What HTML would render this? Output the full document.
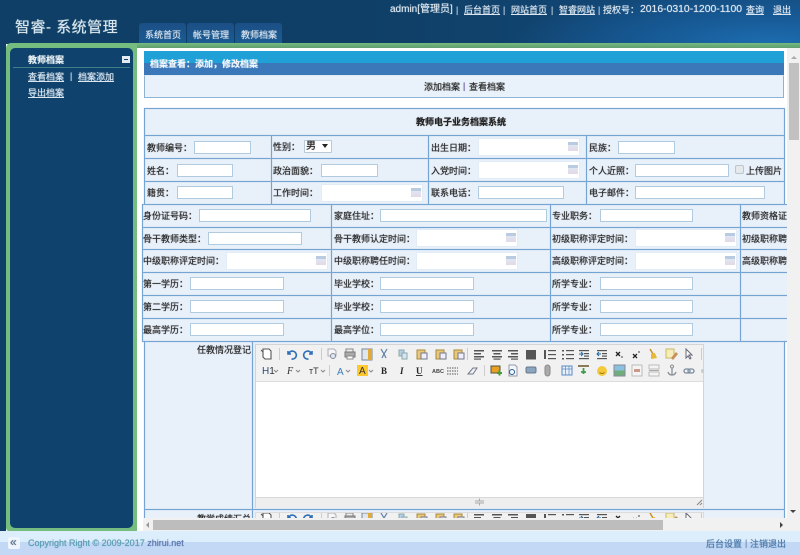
<!DOCTYPE html>
<html lang="zh">
<head>
<meta charset="utf-8">
<title>智睿-系统管理</title>
<style>
html,body{margin:0;padding:0;width:800px;height:555px;overflow:hidden;background:#fff}
body{position:relative;font-family:"Liberation Sans","Noto Sans CJK SC",sans-serif;font-size:9px;color:#2b2b2b}
div,span,a,i{position:absolute;display:block;font-style:normal}
.t{white-space:nowrap;line-height:12px;height:12px;text-shadow:0 0 .7px currentColor}
.l{background:#76a4d2;box-shadow:0 0 1px #a9c6e4}
.i{background:#fff;border:1px solid #b0cadf;box-sizing:border-box;height:13px}
.d{background:#fff;border:1px solid #e2ecf6;box-sizing:border-box;height:18px}
.d:after{content:"";position:absolute;right:1px;top:3px;width:10px;height:9px;background:linear-gradient(#b9cbe0 0 3px,#dfe6f2 3px,#e3d9e6 100%)}
a{color:#dbe6f0;text-decoration:underline}
</style>
</head>
<body>
<!-- header -->
<div style="left:0;top:0;width:800px;height:44px;background:radial-gradient(ellipse 260px 60px at 770px 44px,#1d6db0 0%,#175a96 45%,rgba(20,75,125,0) 100%),linear-gradient(90deg,#0f3f66 0,#0f3f66 45%,#134a7c 100%)"></div>
<div class="t" style="left:15px;top:18px;height:20px;line-height:20px;font-size:15px;color:#d8e6ee;letter-spacing:.5px">智睿- 系统管理</div>
<div style="left:139px;top:23px;width:47px;height:20px;background:linear-gradient(#1b4f85,#1a5b92);border-radius:3px 3px 0 0"></div>
<div style="left:187px;top:23px;width:47px;height:20px;background:linear-gradient(#1b4f85,#1a5b92);border-radius:3px 3px 0 0"></div>
<div style="left:235px;top:23px;width:47px;height:20px;background:linear-gradient(#1b4f85,#1a5b92);border-radius:3px 3px 0 0"></div>
<div class="t" style="left:145px;top:29px;color:#d5e2ee">系统首页</div>
<div class="t" style="left:193px;top:29px;color:#d5e2ee">帐号管理</div>
<div class="t" style="left:241px;top:29px;color:#d5e2ee">教师档案</div>

<div class="t" style="left:390px;top:4px;font-size:10px;color:#dbe6f0">admin[管理员]</div>
<div class="t" style="left:456px;top:4px;color:#b8cde0">|</div>
<a class="t" style="left:464px;top:4px">后台首页</a>
<div class="t" style="left:503px;top:4px;color:#b8cde0">|</div>
<a class="t" style="left:511px;top:4px">网站首页</a>
<div class="t" style="left:551px;top:4px;color:#b8cde0">|</div>
<a class="t" style="left:559px;top:4px">智睿网站</a>
<div class="t" style="left:598px;top:4px;color:#b8cde0">|</div>
<div class="t" style="left:603px;top:4px;color:#dbe6f0">授权号：</div>
<div class="t" style="left:640px;top:4px;font-size:10.4px;color:#dbe6f0">2016-0310-1200-1100</div>
<a class="t" style="left:746px;top:4px">查询</a>
<a class="t" style="left:773px;top:4px">退出</a>

<!-- left side -->
<div style="left:0;top:44px;width:6px;height:487px;background:#0f3f66"></div>
<div style="left:6px;top:43px;width:131px;height:488px;background:#75bd7e;border-radius:5px 0 0 3px"></div>
<div style="left:137px;top:43px;width:663px;height:5px;background:linear-gradient(#76bb7e,#5f9e70)"></div>
<div style="left:10px;top:48px;width:123px;height:480px;background:#0f436d;border-radius:5px"></div>
<div class="t" style="left:28px;top:54px;font-weight:bold;color:#e8f0f4">教师档案</div>
<div style="left:122px;top:56px;width:8px;height:7px;background:#e4ecf2"><i style="left:2px;top:3px;width:4px;height:1px;background:#123f66"></i></div>
<div style="left:13px;top:67px;width:117px;height:1px;background:#3f7f86"></div>
<a class="t" style="left:28px;top:71px">查看档案</a>
<div class="t" style="left:70px;top:70px;color:#cfdde8">|</div>
<a class="t" style="left:78px;top:71px">档案添加</a>
<a class="t" style="left:28px;top:87px">导出档案</a>

<!-- main clip -->
<div style="left:137px;top:48px;width:650px;height:470px;overflow:hidden;background:#fff">
 <div style="left:0;top:0;width:650px;height:470px">
  <div style="left:7px;top:3px;width:640px;height:12px;background:#1fa0d6"></div>
  <div style="left:7px;top:15px;width:640px;height:12px;background:#3a78ba"></div>
  <div class="t" style="left:13px;top:10px;color:#f0f6fa;font-weight:bold">档案查看：添加，修改档案</div>
  <div style="left:7px;top:27px;width:640px;height:23px;box-sizing:border-box;background:#e9f1fa;border:1px solid #8fb3d3;border-top-color:#dfe9f3"></div>
  <div class="t" style="left:287px;top:33px">添加档案</div>
  <div class="t" style="left:326px;top:32px;color:#6a55a8">|</div>
  <div class="t" style="left:332px;top:33px">查看档案</div>
 </div>
</div>

<!-- table bgs -->
<div style="left:144px;top:108px;width:640px;height:96px;background:#e8f0fa"></div>
<div style="left:142px;top:204px;width:645px;height:137px;background:#e8f0fa"></div>
<div style="left:144px;top:341px;width:640px;height:177px;background:#e8f0fa"></div>

<!-- table 1 lines -->
<div class="l" style="left:144px;top:108px;width:640px;height:1px"></div>
<div class="l" style="left:144px;top:135px;width:640px;height:1px"></div>
<div class="l" style="left:144px;top:158px;width:640px;height:1px"></div>
<div class="l" style="left:144px;top:181px;width:640px;height:1px"></div>
<div class="l" style="left:142px;top:204px;width:645px;height:1px"></div>
<div class="l" style="left:144px;top:108px;width:1px;height:96px"></div>
<div class="l" style="left:784px;top:108px;width:1px;height:96px"></div>
<div class="l" style="left:271px;top:135px;width:1px;height:69px"></div>
<div class="l" style="left:428px;top:135px;width:1px;height:69px"></div>
<div class="l" style="left:586px;top:135px;width:1px;height:69px"></div>

<!-- table 2 lines -->
<div class="l" style="left:142px;top:227px;width:645px;height:1px"></div>
<div class="l" style="left:142px;top:249px;width:645px;height:1px"></div>
<div class="l" style="left:142px;top:272px;width:645px;height:1px"></div>
<div class="l" style="left:142px;top:295px;width:645px;height:1px"></div>
<div class="l" style="left:142px;top:318px;width:645px;height:1px"></div>
<div class="l" style="left:142px;top:341px;width:645px;height:1px"></div>
<div class="l" style="left:142px;top:204px;width:1px;height:137px"></div>
<div class="l" style="left:331px;top:204px;width:1px;height:137px"></div>
<div class="l" style="left:550px;top:204px;width:1px;height:137px"></div>
<div class="l" style="left:740px;top:204px;width:1px;height:137px"></div>

<!-- table 3 lines -->
<div class="l" style="left:144px;top:341px;width:1px;height:177px"></div>
<div class="l" style="left:252px;top:341px;width:1px;height:177px"></div>
<div class="l" style="left:784px;top:341px;width:1px;height:177px"></div>
<div class="l" style="left:144px;top:509px;width:640px;height:1px"></div>

<!-- table 1 content -->
<div class="t" style="left:416px;top:116px;font-weight:bold;color:#222">教师电子业务档案系统</div>
<div class="t" style="left:147px;top:142px">教师编号：</div><div class="i" style="left:194px;top:141px;width:57px"></div>
<div class="t" style="left:273px;top:141px">性别：</div>
<div style="left:304px;top:140px;width:28px;height:13px;box-sizing:border-box;background:#fff;border:1px solid #b9c9d6;border-radius:1px"></div>
<div class="t" style="left:306px;top:141px;font-size:10px;color:#222">男</div>
<div style="left:322px;top:144px;width:0;height:0;border:3px solid transparent;border-top:4px solid #222;border-bottom:0"></div>
<div class="t" style="left:431px;top:142px">出生日期：</div><div class="d" style="left:478px;top:138px;width:102px"></div>
<div class="t" style="left:589px;top:142px">民族：</div><div class="i" style="left:618px;top:141px;width:57px"></div>

<div class="t" style="left:147px;top:165px">姓名：</div><div class="i" style="left:177px;top:164px;width:56px"></div>
<div class="t" style="left:273px;top:165px">政治面貌：</div><div class="i" style="left:321px;top:164px;width:57px"></div>
<div class="t" style="left:431px;top:165px">入党时间：</div><div class="d" style="left:478px;top:161px;width:102px"></div>
<div class="t" style="left:589px;top:165px">个人近照：</div><div class="i" style="left:635px;top:164px;width:94px"></div>
<div style="left:735px;top:165px;width:9px;height:9px;box-sizing:border-box;background:#e6e9ec;border:1px solid #bcc4cc;border-radius:2px"></div>
<div class="t" style="left:746px;top:165px">上传图片</div>

<div class="t" style="left:147px;top:187px">籍贯：</div><div class="i" style="left:177px;top:186px;width:56px"></div>
<div class="t" style="left:273px;top:187px">工作时间：</div><div class="d" style="left:321px;top:184px;width:102px"></div>
<div class="t" style="left:431px;top:187px">联系电话：</div><div class="i" style="left:478px;top:186px;width:86px"></div>
<div class="t" style="left:589px;top:187px">电子邮件：</div><div class="i" style="left:635px;top:186px;width:130px"></div>

<!-- table 2 content -->
<div class="t" style="left:143px;top:210px">身份证号码：</div><div class="i" style="left:199px;top:209px;width:112px"></div>
<div class="t" style="left:334px;top:210px">家庭住址：</div><div class="i" style="left:380px;top:209px;width:167px"></div>
<div class="t" style="left:552px;top:210px">专业职务：</div><div class="i" style="left:600px;top:209px;width:93px"></div>
<div style="left:742px;top:208px;width:45px;height:14px;overflow:hidden"><span class="t" style="left:0;top:2px">教师资格证书：</span></div>

<div class="t" style="left:143px;top:233px">骨干教师类型：</div><div class="i" style="left:208px;top:232px;width:94px"></div>
<div class="t" style="left:334px;top:233px">骨干教师认定时间：</div><div class="d" style="left:416px;top:229px;width:102px"></div>
<div class="t" style="left:552px;top:233px">初级职称评定时间：</div><div class="d" style="left:635px;top:229px;width:102px"></div>
<div style="left:742px;top:231px;width:45px;height:14px;overflow:hidden"><span class="t" style="left:0;top:2px">初级职称聘任时间：</span></div>

<div class="t" style="left:143px;top:255px">中级职称评定时间：</div><div class="d" style="left:226px;top:252px;width:102px"></div>
<div class="t" style="left:334px;top:255px">中级职称聘任时间：</div><div class="d" style="left:416px;top:252px;width:102px"></div>
<div class="t" style="left:552px;top:255px">高级职称评定时间：</div><div class="d" style="left:635px;top:252px;width:102px"></div>
<div style="left:742px;top:253px;width:45px;height:14px;overflow:hidden"><span class="t" style="left:0;top:2px">高级职称聘任时间：</span></div>

<div class="t" style="left:143px;top:278px">第一学历：</div><div class="i" style="left:190px;top:277px;width:94px"></div>
<div class="t" style="left:334px;top:278px">毕业学校：</div><div class="i" style="left:380px;top:277px;width:94px"></div>
<div class="t" style="left:552px;top:278px">所学专业：</div><div class="i" style="left:600px;top:277px;width:93px"></div>

<div class="t" style="left:143px;top:301px">第二学历：</div><div class="i" style="left:190px;top:300px;width:94px"></div>
<div class="t" style="left:334px;top:301px">毕业学校：</div><div class="i" style="left:380px;top:300px;width:94px"></div>
<div class="t" style="left:552px;top:301px">所学专业：</div><div class="i" style="left:600px;top:300px;width:93px"></div>

<div class="t" style="left:143px;top:324px">最高学历：</div><div class="i" style="left:190px;top:323px;width:94px"></div>
<div class="t" style="left:334px;top:324px">最高学位：</div><div class="i" style="left:380px;top:323px;width:94px"></div>
<div class="t" style="left:552px;top:324px">所学专业：</div><div class="i" style="left:600px;top:323px;width:93px"></div>

<!-- editor 1 -->
<div class="t" style="left:197px;top:344px">任教情况登记</div>
<div style="left:255px;top:344px;width:449px;height:164px;box-sizing:border-box;background:#fff;border:1px solid #d4d4d4"></div>
<div style="left:256px;top:345px;width:447px;height:36px;background:#f1f1f1;border-bottom:1px solid #dcdcdc"></div>
<div style="left:256px;top:497px;width:447px;height:10px;background:#eeeeee;border-top:1px solid #d8d8d8"></div>

<svg style="position:absolute;left:0;top:0" width="800" height="555" viewBox="0 0 800 555">
 <defs>
  <g id="r1">
   <path d="M263 349h6l2 2v8h-6l-2-2zM263 352l-2-2" fill="#fff" stroke="#555" stroke-width="1.1"/>
   <rect x="279" y="348" width="1" height="12" fill="#ccc"/>
   <path d="M288 351v3h3M288.500 354a4 4 0 1 1 3 5" fill="none" stroke="#2f6fb5" stroke-width="1.6"/>
   <path d="M312 351v3h-3M311.500 354a4 4 0 1 0-3 5" fill="none" stroke="#2f6fb5" stroke-width="1.6"/>
   <rect x="321" y="348" width="1" height="12" fill="#ccc"/>
   <path d="M328 349h6l2 2v5h-8z" fill="#f6f6f6" stroke="#aab"/><circle cx="333" cy="356" r="2.500" fill="#dde8f5" stroke="#889"/>
   <rect x="346" y="349" width="7" height="3" fill="#eee" stroke="#888"/><rect x="345" y="352" width="10" height="5" fill="#aaa" stroke="#777"/><rect x="347" y="356" width="6" height="3" fill="#fff" stroke="#888"/>
   <rect x="362" y="349" width="10" height="11" fill="#dfe6ee" stroke="#789"/><rect x="368" y="349" width="4" height="11" fill="#e0a93a"/>
   <path d="M381 349l3 5 3-5M384 354l-2 4M384 354l2 4" fill="none" stroke="#5a7fa8" stroke-width="1.2"/>
   <rect x="399" y="350" width="5" height="6" fill="#b9cde6" stroke="#8aa"/><rect x="402" y="353" width="5" height="6" fill="#d8e4f3" stroke="#8aa"/>
   <g id="pp"><rect x="417" y="350" width="8" height="9" fill="#e8c87a" stroke="#a98a3e"/><rect x="421" y="353" width="6" height="6" fill="#eef" stroke="#778"/></g>
   <use href="#pp" x="19"/><use href="#pp" x="37"/>
   <rect x="467" y="348" width="1" height="12" fill="#ccc"/>
   <g fill="#555"><rect x="474" y="350" width="10" height="1.500"/><rect x="474" y="353" width="7" height="1.500"/><rect x="474" y="356" width="10" height="1.500"/><rect x="474" y="358.500" width="7" height="1.200"/>
   <rect x="492" y="350" width="10" height="1.500"/><rect x="493.500" y="353" width="7" height="1.500"/><rect x="492" y="356" width="10" height="1.500"/><rect x="493.500" y="358.500" width="7" height="1.200"/>
   <rect x="508" y="350" width="10" height="1.500"/><rect x="511" y="353" width="7" height="1.500"/><rect x="508" y="356" width="10" height="1.500"/><rect x="511" y="358.500" width="7" height="1.200"/>
   <rect x="526" y="350" width="10" height="9.500"/>
   <rect x="548" y="350" width="8" height="1.200"/><rect x="548" y="354" width="8" height="1.200"/><rect x="548" y="358" width="8" height="1.200"/><rect x="544" y="350" width="2" height="9"/>
   <rect x="566" y="350" width="8" height="1.200"/><rect x="566" y="354" width="8" height="1.200"/><rect x="566" y="358" width="8" height="1.200"/><rect x="562" y="350" width="2" height="1.500"/><rect x="562" y="354" width="2" height="1.500"/><rect x="562" y="358" width="2" height="1.500"/>
   <rect x="579" y="350" width="10" height="1.200"/><rect x="584" y="353" width="5" height="1.200"/><rect x="584" y="355.500" width="5" height="1.200"/><rect x="579" y="358" width="10" height="1.200"/>
   <rect x="597" y="350" width="10" height="1.200"/><rect x="602" y="353" width="5" height="1.200"/><rect x="602" y="355.500" width="5" height="1.200"/><rect x="597" y="358" width="10" height="1.200"/></g>
   <path d="M579 354h4M581 352l2 2-2 2" fill="none" stroke="#25689f"/><path d="M597 354h4M599 352l-2 2 2 2" fill="none" stroke="#25689f"/>
   <path d="M616 352l4 4M620 352l-4 4" stroke="#222" stroke-width="1.300"/><rect x="621" y="356" width="2" height="2" fill="#999"/>
   <path d="M633 354l4 4M637 354l-4 4" stroke="#222" stroke-width="1.300"/><rect x="638" y="351" width="2" height="2" fill="#999"/>
   <path d="M650 349l3 5" stroke="#c98f2a" stroke-width="1.500"/><path d="M651 354l4-1 2 5-6 1z" fill="#e8b83a"/>
   <path d="M666 349h8v9h-8z" fill="#f6eeb8" stroke="#c8b868"/><path d="M671 358l5-6 2 2-5 6z" fill="#c98f5a"/>
   <path d="M686 349v9l2-2 2 3 1-1-2-3h3z" fill="#fff" stroke="#667"/>
   <rect x="701" y="348" width="1" height="12" fill="#ccc"/>
  </g>
 </defs>
 <use href="#r1"/>
 <!-- row 2 -->
 <g font-family="Liberation Sans, sans-serif">
  <text x="262" y="374" font-size="10" fill="#2a4a7a">H<tspan fill="#333">1</tspan></text><path d="M274 370l2 2 2-2" fill="none" stroke="#888"/>
  <text x="287" y="374" font-size="10" font-style="italic" font-family="Liberation Serif, serif" fill="#333">F</text><path d="M296 370l2 2 2-2" fill="none" stroke="#888"/>
  <text x="309" y="374" font-size="9" fill="#333">тT</text><path d="M321 370l2 2 2-2" fill="none" stroke="#888"/>
  <rect x="329" y="365" width="1" height="11" fill="#ccc"/>
  <text x="337" y="375" font-size="10" fill="#3a7ec0">A</text><path d="M346 370l2 2 2-2" fill="none" stroke="#888"/>
  <rect x="357" y="365" width="11" height="11" fill="#fdc92f"/><text x="359" y="374" font-size="10" fill="#333">A</text><path d="M369 370l2 2 2-2" fill="none" stroke="#888"/>
  <text x="381" y="374" font-size="9" font-weight="bold" font-family="Liberation Serif, serif" fill="#222">B</text>
  <text x="400" y="374" font-size="9" font-weight="bold" font-style="italic" font-family="Liberation Serif, serif" fill="#222">I</text>
  <text x="416" y="374" font-size="9" font-weight="bold" font-family="Liberation Serif, serif" fill="#222" text-decoration="underline">U</text>
  <text x="432" y="373" font-size="5.500" font-weight="bold" fill="#444">ABC</text>
 </g>
 <path d="M447 368h11M447 371h11M447 374h11" stroke="#555" stroke-dasharray="1.500 1" fill="none"/>
 <path d="M468 374l5-6h4l-4 6h-5z" fill="#eef2f6" stroke="#778"/>
 <rect x="484" y="365" width="1" height="11" fill="#ccc"/>
 <rect x="491" y="366" width="9" height="7" fill="#e8a020" stroke="#554"/><rect x="497" y="372" width="5" height="2" fill="#4a9a3a"/><rect x="498.500" y="370.500" width="2" height="5" fill="#4a9a3a"/>
 <path d="M509 365h6l2 2v9h-8z" fill="#f3f6fa" stroke="#99a"/><circle cx="512" cy="372" r="2.500" fill="none" stroke="#2a5f90"/>
 <rect x="526" y="367" width="10" height="6" rx="1.500" fill="#8aa5c0" stroke="#678"/>
 <rect x="545" y="365" width="5" height="11" rx="2.500" fill="#aaa" stroke="#888"/>
 <rect x="562" y="366" width="10" height="9" fill="#e8f0fa" stroke="#5a8ac4"/><path d="M562 369h10M565.500 366v9M569 366v9" stroke="#5a8ac4" stroke-width=".7"/>
 <rect x="578" y="365" width="11" height="2" fill="#8a7a5a"/><path d="M583.500 368v6M581 372h5" stroke="#3aa04a" stroke-width="1.800"/>
 <circle cx="602" cy="371" r="5" fill="#f3c93e"/><path d="M599.500 372.500q2.500 2 5 0" fill="none" stroke="#9a7a1a"/>
 <rect x="614" y="365" width="11" height="11" fill="#6fae7a" stroke="#889"/><rect x="614.500" y="365.500" width="10" height="5" fill="#8ac0e0"/>
 <rect x="632" y="365" width="10" height="11" fill="#f4f4f4" stroke="#bbb"/><rect x="634" y="369" width="6" height="3" fill="#c98"/>
 <path d="M649 365h10v4h-10zM649 372h10v4h-10z" fill="#f4f4f4" stroke="#bbb"/><path d="M649 370.500h10" stroke="#aaa"/>
 <circle cx="672" cy="366.500" r="1.500" fill="none" stroke="#8a9098"/><path d="M672 368v7M668 372q1 3 4 3t4-3" fill="none" stroke="#8a9098" stroke-width="1.300"/>
 <rect x="684" y="369" width="6" height="4" rx="2" fill="none" stroke="#7a8ca0" stroke-width="1.300"/><rect x="688" y="369" width="6" height="4" rx="2" fill="none" stroke="#7a8ca0" stroke-width="1.300"/>
 <rect x="701" y="369" width="3" height="4" rx="1.500" fill="#c8ccd0"/>
 <!-- grips -->
 <path d="M475 501h9M475 503h9M479.500 498.500v2M479.500 503.500v2" stroke="#aaa" fill="none"/>
 <path d="M697 505l5-5M700 505l2-2" stroke="#888" fill="none"/>
</svg>

<!-- editor 2 -->
<div class="t" style="left:197px;top:513px">教学成绩汇总</div>
<div style="left:255px;top:512px;width:449px;height:6px;overflow:hidden;background:#f1f1f1;border:1px solid #dcdcdc;border-bottom:0;box-sizing:border-box"></div>
<svg style="position:absolute;left:0;top:513px" width="787" height="5" viewBox="0 517 787 5"><use href="#r1" y="168"/></svg>

<!-- scrollbars -->
<div style="left:137px;top:518px;width:6px;height:13px;background:#fff"></div>
<div style="left:143px;top:518px;width:644px;height:13px;background:#f1f1f1"></div>
<div style="left:153px;top:520px;width:510px;height:10px;background:#bdbdbd"></div>
<div style="left:146px;top:522px;width:0;height:0;border:3px solid transparent;border-right:3px solid #999;border-left:0"></div>
<div style="left:780px;top:522px;width:0;height:0;border:3px solid transparent;border-left:3px solid #444;border-right:0"></div>
<div style="left:787px;top:48px;width:13px;height:483px;background:#f1f1f1"></div>
<div style="left:789px;top:63px;width:10px;height:77px;background:#c1c1c1"></div>
<div style="left:791px;top:56px;width:0;height:0;border:3px solid transparent;border-bottom:3px solid #aaa;border-top:0"></div>
<div style="left:790px;top:510px;width:0;height:0;border:3px solid transparent;border-top:3px solid #444;border-bottom:0"></div>

<!-- footer -->
<div style="left:0;top:531px;width:800px;height:11px;background:#dcedfb"></div>
<div style="left:0;top:542px;width:800px;height:13px;background:#c3d8f5"></div>
<div style="left:8px;top:537px;width:12px;height:12px;background:#eef5fc;border-radius:2px"></div>
<div class="t" style="left:10px;top:536px;font-size:12px;color:#5a6f8a">«</div>
<div class="t" style="left:28px;top:537px;font-size:9px;color:#5c9fb4">Copyright Right © 2009-2017 <span style="position:static;display:inline;color:#5a76ad">zhirui.net</span></div>
<div class="t" style="left:706px;top:538px;color:#4a78a8">后台设置</div>
<div class="t" style="left:745px;top:537px;color:#6a90b8">|</div>
<div class="t" style="left:750px;top:538px;color:#4a78a8">注销退出</div>
</body>
</html>
